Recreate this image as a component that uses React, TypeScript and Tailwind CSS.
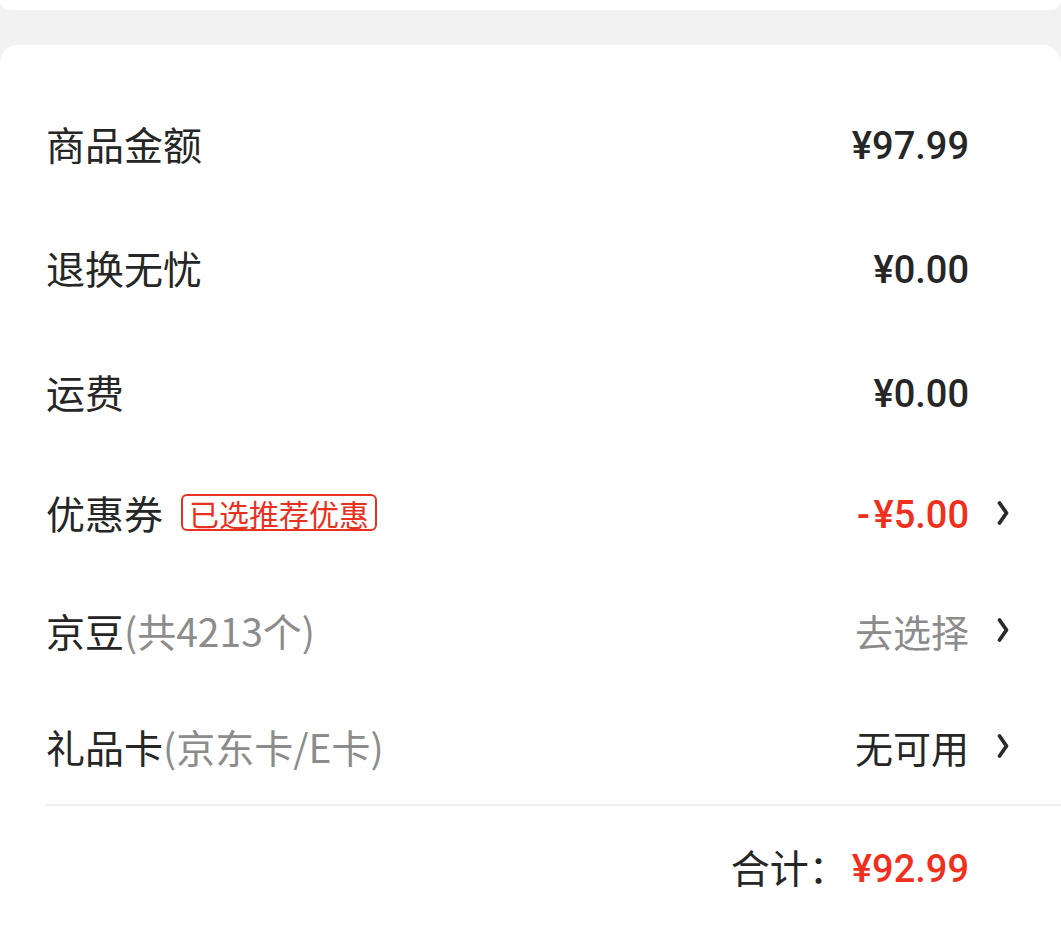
import React from "react";

const cn = "font-['Noto_Sans_CJK_SC',sans-serif]";
const num = "font-['Roboto','Noto_Sans_CJK_SC',sans-serif] text-[38px] font-medium pt-[6px]";

function Chevron({ show = true }: { show?: boolean }) {
  return (
    <span className="w-[16px] h-[28px] ml-[26px] flex items-center justify-center">
      {show && (
        <svg width="14" height="28" viewBox="0 0 14 28" fill="none">
          <path d="M3.5 4 L10.5 14 L3.5 24" stroke="#2b2b2b" strokeWidth="3.8" strokeLinecap="round" strokeLinejoin="round" />
        </svg>
      )}
    </span>
  );
}

interface RowProps {
  h: string;
  left: React.ReactNode;
  right: React.ReactNode;
  arrow?: boolean;
}

function Row({ h, left, right, arrow = false }: RowProps) {
  return (
    <div className={`${h} flex items-center justify-between pl-[46px] pr-[50px]`}>
      <div className={`flex items-center text-[39px] text-[#262626] ${cn}`}>{left}</div>
      <div className="flex items-center">
        {right}
        <Chevron show={arrow} />
      </div>
    </div>
  );
}

export default function App() {
  return (
    <div className="w-[1061px] h-[948px] bg-[#f2f2f2] overflow-hidden">
      <div className="h-[10px] bg-white rounded-b-[14px]" />
      <div className="mt-[35px] bg-white rounded-t-[18px] h-[903px] pt-[36px]">
        <Row
          h="h-[124px]"
          left={<span>商品金额</span>}
          right={<span className={`${num} text-[#262626]`}>¥97.99</span>}
        />
        <Row
          h="h-[124px]"
          left={<span>退换无忧</span>}
          right={<span className={`${num} text-[#262626]`}>¥0.00</span>}
        />
        <Row
          h="h-[124px]"
          left={<span>运费</span>}
          right={<span className={`${num} text-[#262626]`}>¥0.00</span>}
        />
        <Row
          h="h-[119px]"
          arrow
          left={
            <>
              <span>优惠券</span>
              <span className="ml-[18px] h-[37px] px-[6px] flex items-center border-2 border-[#e8311f] rounded-[6px] text-[30px] leading-none text-[#e8311f]">
                已选推荐优惠
              </span>
            </>
          }
          right={
            <span className={`${num} text-[#f0301c]`}>
              <span className="inline-block w-[20px] text-center">-</span>¥5.00
            </span>
          }
        />
        <Row
          h="h-[116px]"
          arrow
          left={
            <>
              <span>京豆</span>
              <span className="text-[#8c8c8c]">(共4213个)</span>
            </>
          }
          right={<span className={`${cn} text-[38px] text-[#8c8c8c]`}>去选择</span>}
        />
        <Row
          h="h-[116px]"
          arrow
          left={
            <>
              <span>礼品卡</span>
              <span className="text-[#8c8c8c]">(京东卡/E卡)</span>
            </>
          }
          right={<span className={`${cn} text-[38px] text-[#262626]`}>无可用</span>}
        />
        <div className="ml-[46px] h-[2px] bg-[#f0f0f0]" />
        <div className="h-[120px] flex items-center justify-end pr-[50px]">
          <span className={`${cn} text-[39px] text-[#262626] mr-[4px]`}>合计：</span>
          <span className={`${num} text-[#f0301c]`}>¥92.99</span>
          <Chevron show={false} />
        </div>
      </div>
    </div>
  );
}
